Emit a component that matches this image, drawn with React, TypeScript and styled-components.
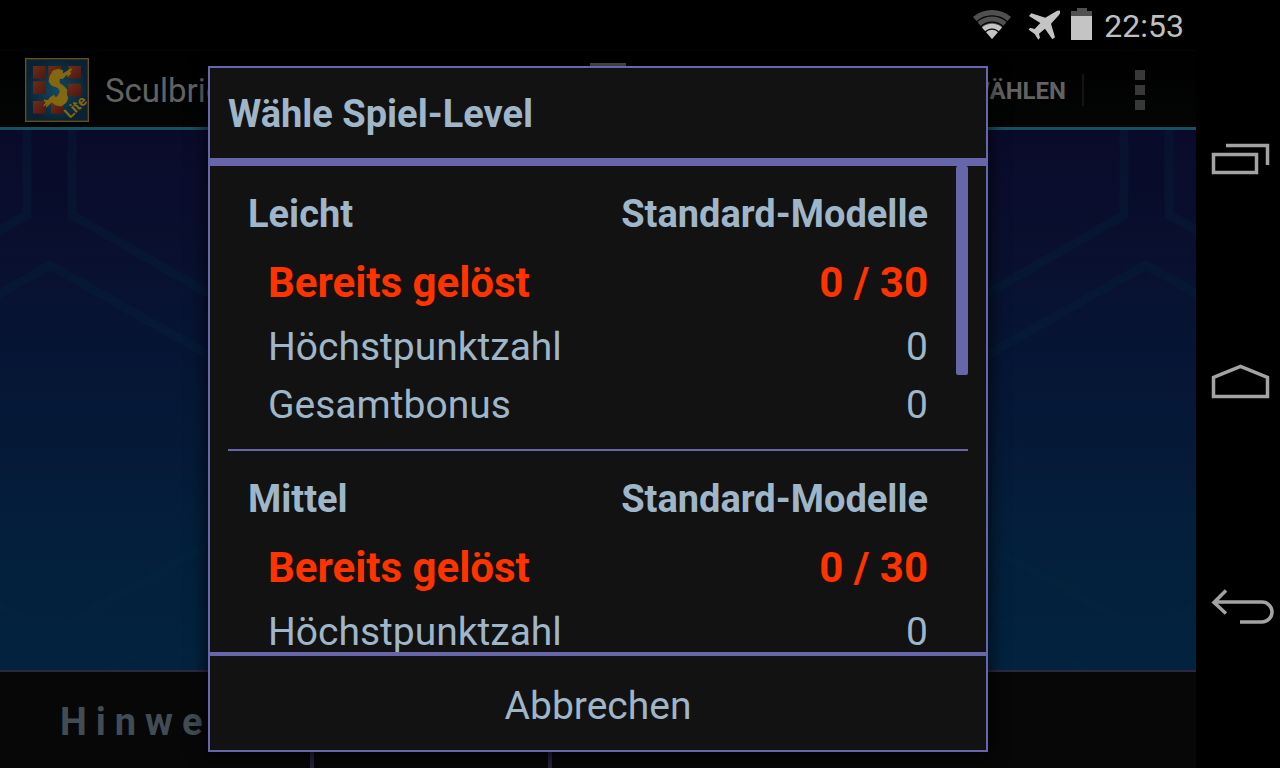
import React from "react";
import styled, { createGlobalStyle } from "styled-components";

const violet = "#6766ab";
const steel = "#9fb6c8";
const panel = "#121212";

const GlobalStyle = createGlobalStyle`
  *, *::before, *::after { box-sizing: border-box; }
  body {
    margin: 0;
    background: #000;
    font-family: Roboto, "Liberation Sans", sans-serif;
  }
  button {
    font: inherit;
    color: inherit;
    background: none;
    border: 0;
    padding: 0;
    cursor: pointer;
  }
  svg { display: block; }
`;

const Device = styled.div`
  display: grid;
  grid-template-columns: minmax(0, 1fr) 84px;
  height: 100vh;
  overflow: hidden;
`;

const Screen = styled.div`
  display: flex;
  flex-direction: column;
  min-height: 0;
`;

const StatusBar = styled.header`
  flex: none;
  height: 50px;
  padding: 0 12px 2px;
  display: flex;
  justify-content: flex-end;
  align-items: center;
  color: #bfbfbf;
`;

const Indicators = styled.div`
  display: flex;
  align-items: center;
  gap: 9px;
`;

const Clock = styled.time`
  margin-left: 3px;
  padding-top: 4px;
  font-size: 32px;
  line-height: 44px;
`;

const Stage = styled.main`
  position: relative;
  flex: 1;
  min-height: 0;
  display: flex;
  flex-direction: column;
`;

const AppBar = styled.div`
  flex: none;
  height: 80px;
  padding-top: 2px;
  display: flex;
  align-items: center;
  border-top: 1px solid #060606;
  border-bottom: 3px solid #17505f;
  background: linear-gradient(#000, #030504);
`;

const Brand = styled.div`
  flex: 1;
  min-width: 0;
  padding-left: 25px;
  display: flex;
  align-items: center;
  gap: 16px;
`;

const AppTitle = styled.h1`
  margin: 0;
  padding-top: 2px;
  font-size: 33px;
  font-weight: 400;
  line-height: 40px;
  color: #626262;
`;

const BlockAction = styled.button`
  width: 36px;
  height: 54px;
  background: #555;
`;

const TextAction = styled.button`
  min-width: 440px;
  padding-top: 2px;
  text-align: right;
  font-size: 24px;
  font-weight: 700;
  line-height: 32px;
  color: #626262;
`;

const BarDivider = styled.span`
  width: 2px;
  height: 32px;
  margin-left: 16px;
  background: #141414;
`;

const OverflowButton = styled.button`
  width: 112px;
  height: 64px;
  display: flex;
  flex-direction: column;
  align-items: center;
  justify-content: center;
  gap: 5px;
`;

const OverflowDot = styled.span`
  width: 10px;
  height: 10px;
  background: #383838;
`;

const Board = styled.div`
  flex: 1;
  min-height: 0;
  background: linear-gradient(#0a0b2b 0%, #0a0f2e 20%, #061535 42%, #051a38 60%, #041e3b 72%, #02233f 100%);
`;

const BoardPattern = styled.svg`
  width: 100%;
  height: 100%;
`;

const BottomBar = styled.div`
  flex: none;
  height: 98px;
  display: flex;
  border-top: 2px solid #2a2940;
  background: #070707;
`;

const BottomButton = styled.button<{ $width?: number }>`
  flex: ${(p) => (p.$width ? "none" : "1")};
  width: ${(p) => (p.$width ? `${p.$width}px` : "auto")};
  padding: 4px 0 0 9px;
  border-right: ${(p) => (p.$width ? "4px solid #26253f" : "0")};
  font-size: 38px;
  font-weight: 700;
  letter-spacing: 9px;
  color: #414c54;
`;

const Scrim = styled.div`
  position: absolute;
  inset: 0;
  padding: 16px;
  display: flex;
  justify-content: center;
  align-items: center;
`;

const Dialog = styled.section`
  width: 780px;
  max-width: 100%;
  max-height: 100%;
  display: flex;
  flex-direction: column;
  border: 2px solid ${violet};
  background: ${panel};
  color: ${steel};
  box-shadow: 0 4px 16px 2px rgba(0, 0, 0, 0.7);
`;

const DialogTitle = styled.h2`
  flex: none;
  margin: 0;
  padding: 2px 18px 0;
  font-size: 38px;
  font-weight: 700;
  line-height: 88px;
  border-bottom: 8px solid ${violet};
`;

const ListFrame = styled.div`
  position: relative;
  flex: 1;
  min-height: 0;
  display: flex;
`;

const LevelList = styled.ul`
  flex: 1;
  margin: 0;
  padding: 0 18px;
  list-style: none;
  overflow-y: auto;
  scrollbar-width: none;
`;

const ScrollThumb = styled.span`
  position: absolute;
  top: 0;
  right: 18px;
  width: 12px;
  height: 43%;
  border-radius: 2px;
  background: ${violet};
`;

const LevelItem = styled.li`
  border-bottom: 2px solid ${violet};
`;

const LevelButton = styled.button`
  display: block;
  width: 100%;
  padding: 14px 40px 15px 20px;
  text-align: left;
`;

const LevelHeading = styled.span`
  display: flex;
  justify-content: space-between;
  font-size: 38px;
  font-weight: 700;
  line-height: 68px;
`;

const StatRow = styled.span<{ $solved?: boolean }>`
  display: flex;
  justify-content: space-between;
  padding-left: 20px;
  font-size: ${(p) => (p.$solved ? 42 : 39)}px;
  font-weight: ${(p) => (p.$solved ? 700 : 400)};
  line-height: ${(p) => (p.$solved ? 70 : 58)}px;
  color: ${(p) => (p.$solved ? "#ff3300" : "inherit")};
`;

const CancelButton = styled.button`
  flex: none;
  padding-top: 6px;
  border-top: 4px solid ${violet};
  font-size: 39px;
  line-height: 88px;
`;

const NavBar = styled.nav`
  display: flex;
  flex-direction: column;
  justify-content: center;
  background: #000;
`;

const NavButton = styled.button`
  flex: 0 1 224px;
  display: flex;
  align-items: center;
  justify-content: center;
`;

const WifiIcon = () => (
  <svg width="46" height="32" viewBox="972 8 46 32" aria-label="WLAN" role="img">
    <path d="M992 39 L973 17 A29 29 0 0 1 1011 17 Z" fill="#505050" />
    <path d="M992 39 L982 27.400 A15.300 15.300 0 0 1 1002 27.400 Z" fill="#c4c4c4" />
    <g fill="none" stroke="#000" strokeWidth="1.300">
      <path d="M976.500 22 A22.800 22.800 0 0 1 1007.500 22" />
      <path d="M980.500 27 A16.200 16.200 0 0 1 1003.500 27" />
      <path d="M985 32.500 A9 9 0 0 1 999 32.500" />
    </g>
  </svg>
);

const PlaneIcon = () => (
  <svg width="35" height="32" viewBox="200 24 105 96" aria-label="Flugmodus" role="img">
    <path
      fill="#c4c4c4"
      d="M299 32 Q301 38 296 45 L272 71 L284 112 L276 118 L254 86 L236 101 L239 113 L234 119 L223 102 L205 89 L209 83 L223 87 L240 69 L206 48 L213 40 L255 53 L284 36 Q292 31 299 32Z"
    />
  </svg>
);

const BatteryIcon = () => (
  <svg width="21" height="32" viewBox="0 0 21 32" aria-label="Akku" role="img">
    <path d="M6 0H16V3H21V8H0V3H6Z" fill="#505050" />
    <path d="M0 8H21V32H0Z" fill="#c4c4c4" />
  </svg>
);

const AppLogo = () => (
  <svg width="64" height="64" viewBox="0 0 192 192" aria-hidden="true">
    <defs>
      <radialGradient id="logoBack">
        <stop offset="0" stopColor="#104a60" />
        <stop offset="1" stopColor="#0a2234" />
      </radialGradient>
      <linearGradient id="brick" x1="0" y1="0" x2="1" y2="1">
        <stop offset="0" stopColor="#6c2e18" />
        <stop offset="1" stopColor="#4e160f" />
      </linearGradient>
    </defs>
    <rect x="2" y="2" width="188" height="188" fill="url(#logoBack)" stroke="#665018" strokeWidth="4" />
    <g fill="url(#brick)">
      <rect x="24" y="24" width="38" height="38" />
      <rect x="70" y="24" width="38" height="38" />
      <rect x="130" y="24" width="38" height="38" />
      <rect x="24" y="70" width="38" height="38" />
      <rect x="130" y="77" width="38" height="38" />
      <rect x="24" y="129" width="38" height="38" />
      <rect x="78" y="129" width="38" height="38" />
    </g>
    <path
      fill="#84680f"
      stroke="#84680f"
      strokeWidth="3"
      d="M138 32 L122 43 L111 49 L113 38 L100 34 L84 39 L75 55 L72 70 L79 81 L100 89 L106 100 L101 111 L92 120 L87 112 L75 119 L69 128 L57 126 L63 134 L56 143 L67 137 L64 147 L80 132 L91 140 L109 144 L124 132 L128 119 L124 108 L126 96 L116 85 L102 75 L103 60 L113 62 L124 51 L134 50 L127 57 L138 45 L133 43 L140 34Z"
    />
    <text
      transform="translate(134 183) rotate(-43)"
      fontFamily="Roboto, sans-serif"
      fontSize="44"
      fontWeight="700"
      fill="#84680f"
    >
      Lite
    </text>
  </svg>
);

const navIcons = [
  {
    label: "Letzte Apps",
    view: "1196 128 84 64",
    path: "M1213.500 154.500H1256.500V172.500H1213.500Z M1226 145.500H1267.500V165",
  },
  {
    label: "Startseite",
    view: "1196 352 84 64",
    path: "M1213.500 396.500V377.500L1240.500 366.500L1267.500 377.500V396.500Z",
  },
  {
    label: "Zurück",
    view: "1196 576 84 64",
    path: "M1226 590.500L1214 602.500L1226 613.500 M1214 602H1262A10 10 0 0 1 1262 622H1240",
  },
];

const NavIcon = ({ view, path }: { view: string; path: string }) => (
  <svg width="84" height="64" viewBox={view} aria-hidden="true">
    <path d={path} fill="none" stroke="#a3a3a3" strokeWidth="3.500" />
  </svg>
);

const patternHalf = (
  <>
    <path d="M31 -10V87L68 87V-10Z" fill="#060c28" stroke="none" opacity="0.4" />
    <path d="M27 -10V85L-20 111" />
    <path d="M72 -10V85L260 193" />
    <path d="M-20 175L50 135L260 254" />
    <path d="M-20 464L50 504L260 386" />
    <path d="M90 552L260 454" />
  </>
);

const levels = [
  { name: "Leicht", solved: "0 / 30", high: "0", bonus: "0" },
  { name: "Mittel", solved: "0 / 30", high: "0", bonus: "0" },
];

export default function App() {
  return (
    <>
      <GlobalStyle />
      <Device>
        <Screen>
          <StatusBar>
            <Indicators>
              <WifiIcon />
              <PlaneIcon />
              <BatteryIcon />
              <Clock>22:53</Clock>
            </Indicators>
          </StatusBar>
          <Stage>
            <AppBar>
              <Brand>
                <AppLogo />
                <AppTitle>Sculbricks</AppTitle>
              </Brand>
              <BlockAction aria-label="Ansicht" />
              <TextAction>WÄHLEN</TextAction>
              <BarDivider />
              <OverflowButton aria-label="Weitere Optionen">
                <OverflowDot />
                <OverflowDot />
                <OverflowDot />
              </OverflowButton>
            </AppBar>
            <Board>
              <BoardPattern viewBox="0 0 1196 540" preserveAspectRatio="xMidYMid slice" aria-hidden="true">
                <g fill="none" stroke="#02263c" strokeOpacity="0.28" strokeWidth="9">
                  {patternHalf}
                  <g transform="translate(1196 0) scale(-1 1)">{patternHalf}</g>
                </g>
              </BoardPattern>
            </Board>
            <BottomBar>
              <BottomButton $width={314}>Hinweis</BottomButton>
              <BottomButton $width={238} aria-label="Zurücksetzen" />
              <BottomButton aria-label="Weiter" />
            </BottomBar>
            <Scrim>
              <Dialog role="dialog" aria-labelledby="level-title">
                <DialogTitle id="level-title">Wähle Spiel-Level</DialogTitle>
                <ListFrame>
                  <LevelList>
                    {levels.map((level) => (
                      <LevelItem key={level.name}>
                        <LevelButton>
                          <LevelHeading>
                            <span>{level.name}</span>
                            <span>Standard-Modelle</span>
                          </LevelHeading>
                          <StatRow $solved>
                            <span>Bereits gelöst</span>
                            <span>{level.solved}</span>
                          </StatRow>
                          <StatRow>
                            <span>Höchstpunktzahl</span>
                            <span>{level.high}</span>
                          </StatRow>
                          <StatRow>
                            <span>Gesamtbonus</span>
                            <span>{level.bonus}</span>
                          </StatRow>
                        </LevelButton>
                      </LevelItem>
                    ))}
                  </LevelList>
                  <ScrollThumb />
                </ListFrame>
                <CancelButton>Abbrechen</CancelButton>
              </Dialog>
            </Scrim>
          </Stage>
        </Screen>
        <NavBar aria-label="Systemnavigation">
          {navIcons.map((icon) => (
            <NavButton key={icon.label} aria-label={icon.label}>
              <NavIcon view={icon.view} path={icon.path} />
            </NavButton>
          ))}
        </NavBar>
      </Device>
    </>
  );
}
